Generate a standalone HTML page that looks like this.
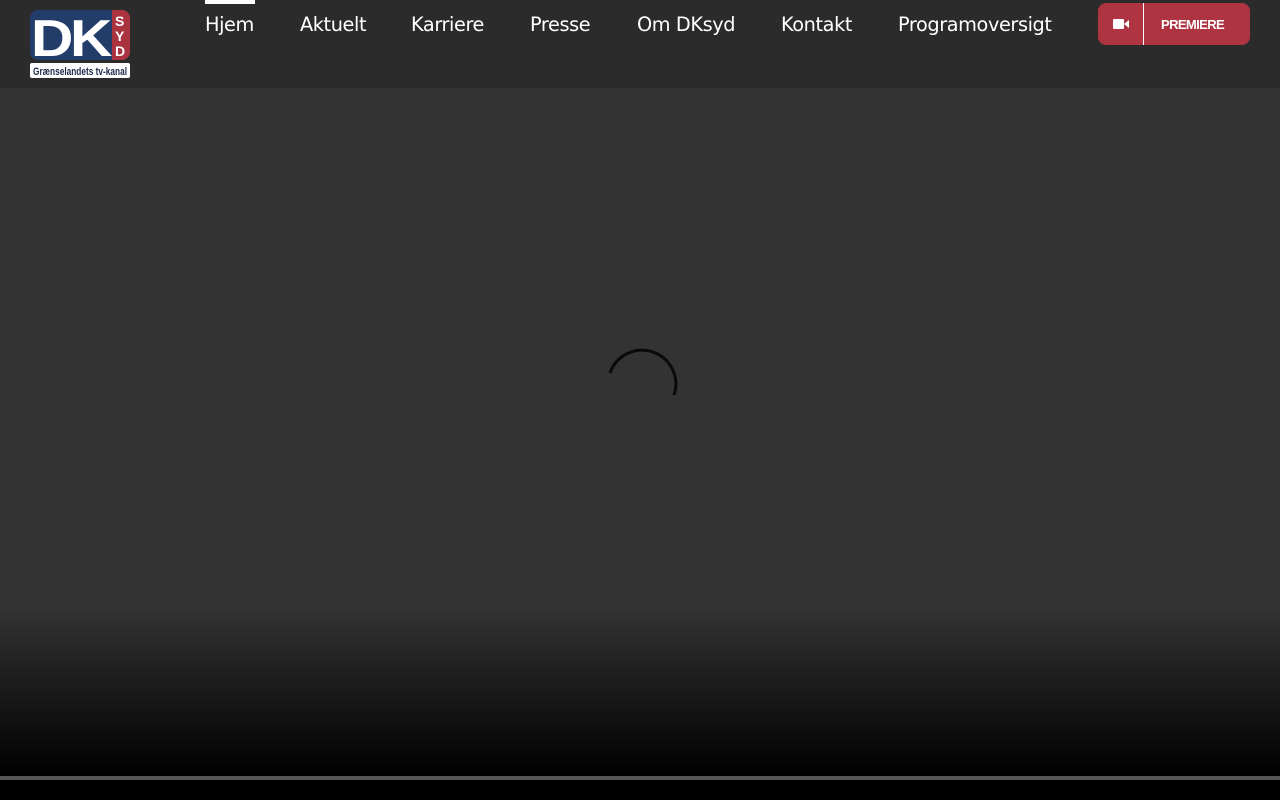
<!DOCTYPE html>
<html><head><meta charset="utf-8"><style>
body{margin:0;width:1280px;height:800px;overflow:hidden;background:#000;font-family:"Liberation Sans",sans-serif}
.hdr{position:absolute;left:0;top:0;width:1280px;height:88px;background:#2b2b2b}
.main{position:absolute;left:0;top:88px;width:1280px;height:688px;background:linear-gradient(#333 0,#333 520px,#000 688px)}
.bar{position:absolute;left:0;top:776px;width:1280px;height:4px;background:#555}
.nav a{position:absolute;top:13px;color:#fff;text-decoration:none;font-family:"DejaVu Sans","Liberation Sans",sans-serif;font-size:19.3px;letter-spacing:-0.4px}
.act{position:absolute;left:205px;top:0;width:50px;height:4px;background:#fff}
.btn{position:absolute;left:1098px;top:3px;width:152px;height:42px;background:#ae3441;border-radius:8px}
.btn .sep{position:absolute;left:45px;top:0;width:1px;height:42px;background:#fff}
.btn span{position:absolute;left:63px;top:14px;color:#fff;font-weight:bold;font-size:13px;letter-spacing:-0.6px}
</style></head><body>
<div class="hdr">
<svg style="position:absolute;left:30px;top:10px" width="100" height="68">
<rect x="0" y="0" width="100" height="50" rx="8" fill="#ab3340"/>
<path d="M8 0H82V50H8A8 8 0 0 1 0 42V8A8 8 0 0 1 8 0Z" fill="#233d6a"/>
<text x="1" y="46" font-family="Liberation Sans" font-weight="bold" font-size="52" fill="#fff" letter-spacing="-3" textLength="78" lengthAdjust="spacingAndGlyphs">DK</text>
<text x="85" y="16" font-family="Liberation Sans" font-weight="bold" font-size="14" fill="#fff">S</text>
<text x="85" y="31" font-family="Liberation Sans" font-weight="bold" font-size="14" fill="#fff">Y</text>
<text x="85" y="46" font-family="Liberation Sans" font-weight="bold" font-size="14" fill="#fff">D</text>
<rect x="0" y="53" width="100" height="15" rx="2" fill="#fff"/>
<text x="50" y="65" text-anchor="middle" font-family="Liberation Sans" font-weight="bold" font-size="11" fill="#1d2a4a" textLength="94" lengthAdjust="spacingAndGlyphs">Grænselandets tv-kanal</text>
</svg>
<div class="act"></div>
<div class="nav">
<a style="left:205px">Hjem</a><a style="left:300px">Aktuelt</a><a style="left:411px">Karriere</a><a style="left:530px">Presse</a><a style="left:637px">Om DKsyd</a><a style="left:781px">Kontakt</a><a style="left:898px">Programoversigt</a>
</div>
<div class="btn"><svg style="position:absolute;left:15px;top:15px" width="16" height="12"><rect x="0" y="1" width="11" height="10" rx="1" fill="#fff"/><path d="M11 6L16 2V10Z" fill="#fff"/></svg><div class="sep"></div><span>PREMIERE</span></div>
</div>
<div class="main"></div>
<svg style="position:absolute;left:0;top:0" width="1280" height="800"><path d="M610 373A33 33 0 0 1 674 395" fill="none" stroke="#0a0a0a" stroke-width="3"/></svg>
<div class="bar"></div>
</body></html>
